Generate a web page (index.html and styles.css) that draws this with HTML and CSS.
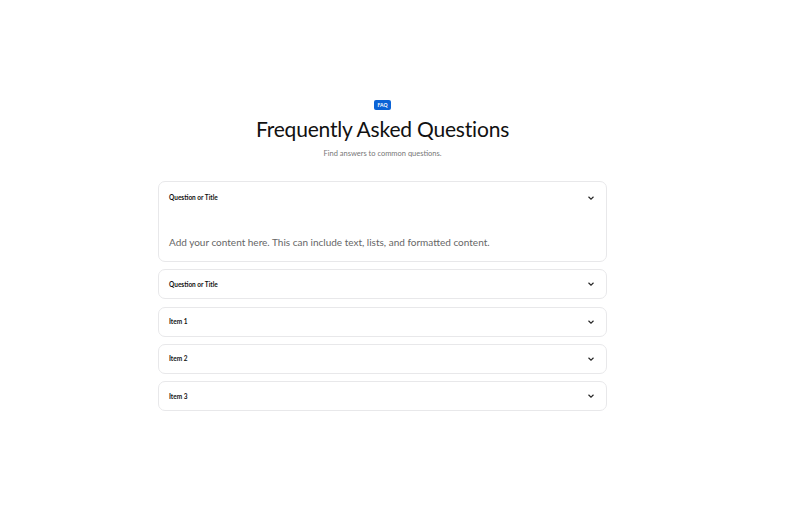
FILE: index.html
```html
<!DOCTYPE html>
<html lang="en">
<head>
    <meta charset="UTF-8">
    <meta name="viewport" content="width=device-width, initial-scale=1.0">
    <title>FAQ</title>
    <link rel="stylesheet" href="styles.css">
</head>
<body>
    <section class="faq">
        <div class="faq-header">
            <span class="badge">FAQ</span>
            <h1>Frequently Asked Questions</h1>
            <p>Find answers to common questions.</p>
        </div>

        <div class="faq-list">
            <div class="faq-item open">
                <div class="faq-question">
                    <span>Question or Title</span>
                    <svg class="chevron" viewBox="0 0 24 24"><path d="M6 9l6 6 6-6"/></svg>
                </div>
                <div class="faq-answer">Add your content here. This can include text, lists, and formatted content.</div>
            </div>
            <div class="faq-item">
                <div class="faq-question">
                    <span>Question or Title</span>
                    <svg class="chevron" viewBox="0 0 24 24"><path d="M6 9l6 6 6-6"/></svg>
                </div>
            </div>
            <div class="faq-item">
                <div class="faq-question">
                    <span>Item 1</span>
                    <svg class="chevron" viewBox="0 0 24 24"><path d="M6 9l6 6 6-6"/></svg>
                </div>
            </div>
            <div class="faq-item">
                <div class="faq-question">
                    <span>Item 2</span>
                    <svg class="chevron" viewBox="0 0 24 24"><path d="M6 9l6 6 6-6"/></svg>
                </div>
            </div>
            <div class="faq-item">
                <div class="faq-question">
                    <span>Item 3</span>
                    <svg class="chevron" viewBox="0 0 24 24"><path d="M6 9l6 6 6-6"/></svg>
                </div>
            </div>
        </div>
    </section>
</body>
</html>
```

FILE: styles.css
```css
* {
    margin: 0;
    padding: 0;
    box-sizing: border-box;
}

body {
    font-family: Lato, 'Noto Sans', sans-serif;
    background: #fff;
    color: #111;
    padding-right: 35px;
}

.faq {
    width: 449px;
    margin: 0 auto;
    padding-top: 100px;
}

.faq-header {
    display: flex;
    flex-direction: column;
    align-items: center;
    margin-bottom: 23px;
}

.badge {
    background: #0b63d6;
    color: #fff;
    font-size: 5px;
    font-weight: 700;
    padding: 2px 4px;
    border-radius: 2px;
    line-height: 6px;
}

.faq-header h1 {
    font-size: 21px;
    font-weight: 400;
    letter-spacing: -0.2px;
    color: #111;
    margin-top: 6px;
    line-height: 26px;
}

.faq-header p {
    font-size: 7.5px;
    color: #777;
    margin-top: 7px;
}

.faq-list {
    display: flex;
    flex-direction: column;
    gap: 7.33px;
}

.faq-item {
    border: 1px solid #e8e8ea;
    border-radius: 7px;
    background: #fff;
}

.faq-question {
    height: 28px;
    padding: 0 10px;
    display: flex;
    align-items: center;
    justify-content: space-between;
    font-size: 6.5px;
    font-weight: 700;
}

.open .faq-question {
    height: 31px;
}

.chevron {
    width: 10px;
    height: 10px;
    fill: none;
    stroke: #222;
    stroke-width: 2.6;
}

.faq-answer {
    padding: 22px 10px 12px;
    font-size: 10px;
    line-height: 14px;
    color: #666;
}
```
